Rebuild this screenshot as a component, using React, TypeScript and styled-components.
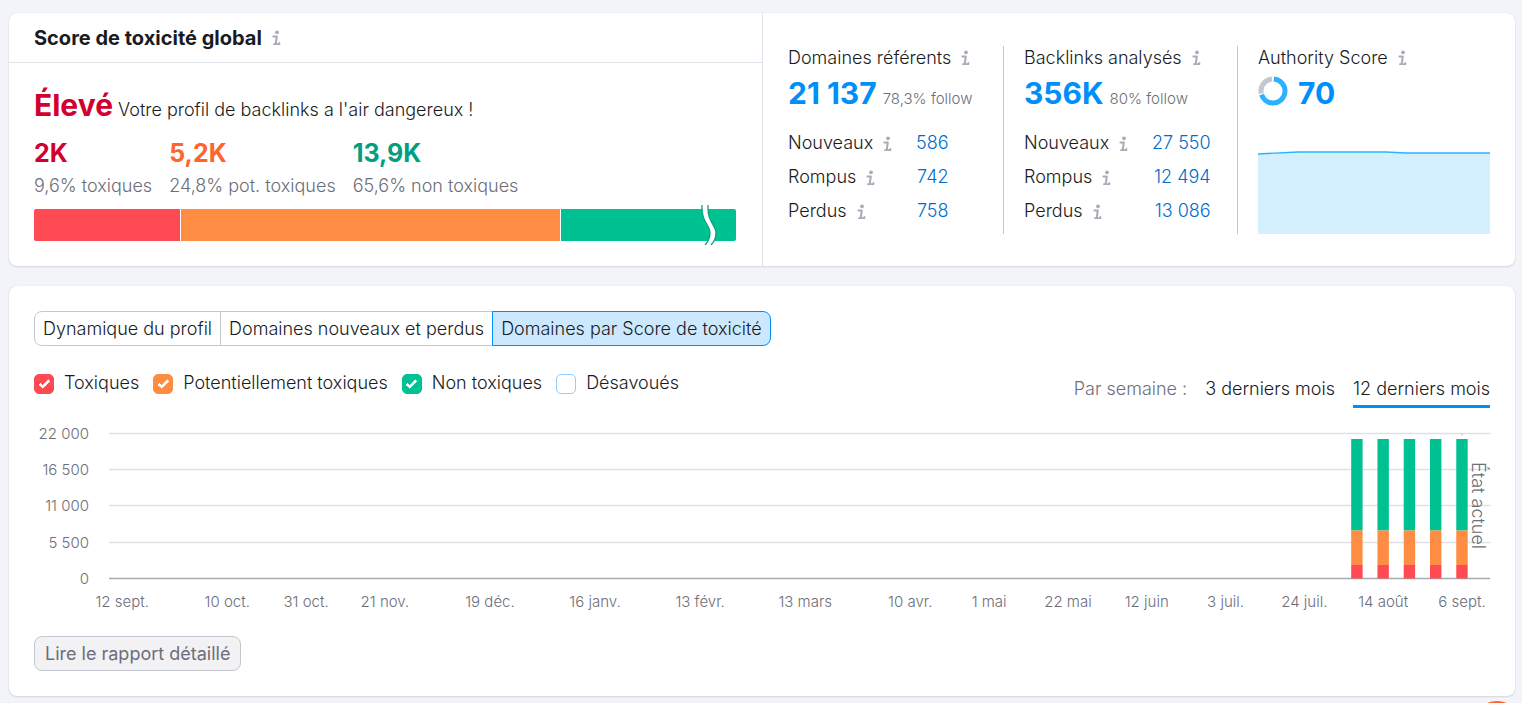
import React from "react";
import styled, { createGlobalStyle } from "styled-components";

const color = {
  page: "#f3f4f9",
  ink: "#191b23",
  muted: "#6c6e79",
  line: "#e0e1e9",
  border: "#c4c7cf",
  link: "#006dca",
  blue: "#008ff8",
  sky: "#2bb3ff",
  red: "#ff4953",
  orange: "#ff8c43",
  green: "#00c192",
};

const GlobalStyle = createGlobalStyle`
  *, *::before, *::after { box-sizing: border-box; }
  body {
    margin: 0;
    background: ${color.page};
    color: ${color.ink};
    font-family: Inter, "Liberation Sans", sans-serif;
    font-size: 18px;
    font-weight: 300;
    line-height: 24px;
    overflow-x: hidden;
  }
  button { font: inherit; color: inherit; cursor: pointer; }
  h2, h3, p { margin: 0; }
  a { color: inherit; text-decoration: none; }
`;

const Page = styled.main`
  display: flex;
  flex-direction: column;
  gap: 20px;
  padding: 13px 7px 7px 9px;
`;

const Card = styled.section`
  background: #fff;
  border-radius: 8px;
  box-shadow: 0 0 1px rgba(25, 27, 35, 0.16), 0 1px 2px rgba(25, 27, 35, 0.12);
`;

const Overview = styled(Card)`
  display: grid;
  grid-template-columns: 754fr 752fr;
`;

const ScorePane = styled.div`
  border-right: 1px solid ${color.line};
`;

const PaneHeader = styled.header`
  display: flex;
  align-items: center;
  height: 50px;
  padding: 0 25px;
  border-bottom: 1px solid ${color.line};
`;

const PaneTitle = styled.h2`
  font-size: 20px;
  font-weight: 700;
`;

const PaneBody = styled.div`
  padding: 24px 26px 25px 25px;
`;

const Verdict = styled.p`
  line-height: 36px;
  strong {
    margin-right: 5px;
    color: #d1002f;
    font-size: 30px;
    font-weight: 700;
  }
`;

const Totals = styled.div`
  display: flex;
  gap: 17px;
  margin-top: 10px;
`;

const Total = styled.div<{ $tone: string }>`
  color: ${color.muted};
  strong {
    display: block;
    margin-bottom: 6px;
    color: ${(p) => p.$tone};
    font-size: 25px;
    font-weight: 700;
    line-height: 30px;
  }
`;

const ShareBar = styled.div`
  position: relative;
  display: flex;
  gap: 1px;
  height: 32px;
  margin-top: 11px;
`;

const Share = styled.div<{ $tone: string; $grow: number }>`
  flex: ${(p) => p.$grow} 1 0;
  background: ${(p) => p.$tone};
  &:first-child { border-radius: 2px 0 0 2px; }
  &:nth-child(3) { border-radius: 0 2px 2px 0; }
`;

const BreakMark = styled.svg`
  position: absolute;
  top: -4px;
  right: 19px;
  width: 16px;
  height: 40px;
`;

const Metrics = styled.div`
  display: grid;
  grid-template-columns: 216fr 234fr 252fr;
  padding: 33px 25px 32px;
`;

const Metric = styled.article`
  display: flex;
  flex-direction: column;
  min-width: 0;
  & + & { padding-left: 20px; }
  &:not(:last-child) { border-right: 1px solid ${color.border}; }
`;

const MetricTitle = styled.h3`
  display: flex;
  align-items: center;
  font-size: 18px;
  font-weight: 300;
`;

const MetricValue = styled.p`
  display: flex;
  align-items: baseline;
  gap: 6px;
  margin-top: 5px;
  color: ${color.muted};
  font-size: 15px;
  line-height: 36px;
  white-space: nowrap;
  a {
    color: ${color.blue};
    font-size: 30px;
    font-weight: 700;
  }
`;

const AuthorityValue = styled(MetricValue)`
  align-items: center;
  gap: 10px;
  svg { overflow: visible; }
`;

const Breakdown = styled.table`
  width: max-content;
  margin-top: 14px;
  border-collapse: collapse;
  th {
    width: 128px;
    padding: 0 0 10px;
    font-weight: 300;
    text-align: left;
  }
  td {
    padding: 0 0 10px;
    color: ${color.link};
    text-align: right;
  }
  tr:last-child > * { padding-bottom: 0; }
`;

const InfoButton = styled.button`
  display: inline-flex;
  margin: 0 0 0 10px;
  padding: 0;
  border: 0;
  background: none;
  color: #a9abb6;
  vertical-align: -3px;
`;

const Trend = styled.svg`
  display: block;
  width: 100%;
  height: 84px;
  margin-top: auto;
`;

const ChartCard = styled(Card)`
  padding: 25px;
`;

const Tabs = styled.div`
  display: flex;
`;

const Tab = styled.button<{ $active?: boolean }>`
  height: 35px;
  padding: 0 8px;
  border: 1px solid ${(p) => (p.$active ? color.blue : color.border)};
  background: ${(p) => (p.$active ? "#cce8ff" : "#fff")};
  & + & { margin-left: -1px; }
  &:first-child { border-radius: 8px 0 0 8px; }
  &:last-child { border-radius: 0 8px 8px 0; }
`;

const Filters = styled.div`
  display: flex;
  justify-content: space-between;
  margin-top: 25px;
`;

const Legend = styled.div`
  display: flex;
  align-items: flex-start;
  gap: 14px;
`;

const LegendItem = styled.label`
  display: flex;
  align-items: center;
  gap: 10px;
`;

const CheckBox = styled.input<{ $tone: string }>`
  appearance: none;
  flex: none;
  display: grid;
  place-items: center;
  width: 20px;
  height: 20px;
  margin: 2px 0 0;
  border: 1px solid #8ecdff;
  border-radius: 5px;
  background: #fff;
  &:checked {
    border-color: ${(p) => p.$tone};
    background: ${(p) => p.$tone};
  }
  &:checked::before {
    content: "";
    width: 11px;
    height: 6px;
    border: solid #fff;
    border-width: 0 0 3px 3px;
    border-radius: 1px;
    transform: translateY(-1px) rotate(-45deg);
  }
`;

const Periods = styled.div`
  display: flex;
  gap: 18px;
  margin-top: 6px;
  color: ${color.muted};
`;

const Period = styled.button<{ $active?: boolean }>`
  height: 31px;
  padding: 0 0 4px;
  border: 0;
  border-bottom: 3px solid ${(p) => (p.$active ? color.blue : "transparent")};
  background: none;
  color: ${color.ink};
`;

const Chart = styled.svg`
  display: block;
  width: 100%;
  height: auto;
  margin-top: 12px;
  text { fill: ${color.muted}; }
`;

const ReportButton = styled.button`
  height: 35px;
  margin-top: 16px;
  padding: 0 10px;
  border: 1px solid ${color.border};
  border-radius: 8px;
  background: #f2f2f5;
  color: ${color.muted};
  font-weight: 400;
`;

const ChatBubble = styled.button`
  position: fixed;
  right: -1px;
  bottom: -50px;
  width: 52px;
  height: 52px;
  padding: 0;
  border: 0;
  border-radius: 50%;
  background: #ff642d;
`;

function Info({ about }: { about: string }) {
  return (
    <InfoButton type="button" aria-label={`Informations : ${about}`}>
      <svg width="9" height="16" viewBox="0 0 9 16" fill="none" stroke="currentColor" aria-hidden="true">
        <circle cx="5" cy="2.3" r="1.9" fill="currentColor" stroke="none" />
        <path d="M1.4 6.5H4.8L3.7 14" strokeWidth="2" strokeLinecap="round" strokeLinejoin="round" />
        <path d="M2 14.2H7.4V12.9" strokeWidth="1.8" strokeLinecap="round" strokeLinejoin="round" />
      </svg>
    </InfoButton>
  );
}

function Rows({ values }: { values: [string, string][] }) {
  return (
    <Breakdown>
      <tbody>
        {values.map(([label, value]) => (
          <tr key={label}>
            <th scope="row">{label}<Info about={label} /></th>
            <td><a href="#domaines">{value}</a></td>
          </tr>
        ))}
      </tbody>
    </Breakdown>
  );
}

const legend = [
  { label: "Toxiques", tone: color.red, on: true },
  { label: "Potentiellement toxiques", tone: color.orange, on: true },
  { label: "Non toxiques", tone: color.green, on: true },
  { label: "Désavoués", tone: color.blue, on: false },
];

const scale = ["22 000", "16 500", "11 000", "5 500", "0"];

const weeks: [number, string][] = [
  [0, "12 sept."], [4, "10 oct."], [7, "31 oct."], [10, "21 nov."],
  [14, "19 déc."], [18, "16 janv."], [22, "13 févr."], [26, "13 mars"],
  [30, "10 avr."], [33, "1 mai"], [36, "22 mai"], [39, "12 juin"],
  [42, "3 juil."], [45, "24 juil."], [48, "14 août"], [51, "6 sept."],
];

const weekX = (week: number) => 88.2 + week * 26.27;
const gridY = (index: number) => 13.5 + Math.round(index * 36.24);

function ToxicityChart() {
  return (
    <Chart viewBox="0 0 1456 200" role="img" aria-label="Domaines par Score de toxicité">
      {scale.map((label, i) => (
        <g key={label}>
          <text x="55" y={gridY(i) + 5.5} fontSize="15" textAnchor="end">{label}</text>
          <line x1="75" x2="1456" y1={gridY(i)} y2={gridY(i)} stroke={i === 4 ? "#a3abae" : "#e0e1e5"} strokeWidth={i === 4 ? 1.4 : 1.3} />
        </g>
      ))}
      <line x1={weekX(51)} x2={weekX(51)} y1="13" y2="16" stroke={color.border} />
      {[47, 48, 49, 50, 51].map((week) => (
        <g key={week}>
          <rect x={weekX(week) - 5.7} y="19" width="11.4" height="91.5" fill={color.green} />
          <rect x={weekX(week) - 5.7} y="110.5" width="11.4" height="34.5" fill={color.orange} />
          <rect x={weekX(week) - 5.7} y="145" width="11.4" height="13.5" fill={color.red} />
        </g>
      ))}
      <text transform="translate(1438 42) rotate(90)" fontSize="18">État actuel</text>
      {weeks.map(([week, label]) => (
        <text key={week} x={weekX(week)} y="187" fontSize="15" textAnchor="middle">{label}</text>
      ))}
    </Chart>
  );
}

export default function App() {
  return (
    <>
      <GlobalStyle />
      <Page>
        <Overview>
          <ScorePane>
            <PaneHeader>
              <PaneTitle>Score de toxicité global</PaneTitle>
              <Info about="Score de toxicité global" />
            </PaneHeader>
            <PaneBody>
              <Verdict><strong>Élevé</strong>Votre profil de backlinks a l'air dangereux !</Verdict>
              <Totals>
                <Total $tone="#d1002f"><strong>2K</strong>9,6% toxiques</Total>
                <Total $tone="#ff642d"><strong>5,2K</strong>24,8% pot. toxiques</Total>
                <Total $tone="#009f81"><strong>13,9K</strong>65,6% non toxiques</Total>
              </Totals>
              <ShareBar>
                <Share $tone={color.red} $grow={146} />
                <Share $tone={color.orange} $grow={379} />
                <Share $tone={color.green} $grow={175} />
                <BreakMark viewBox="0 0 16 40" fill="none" aria-hidden="true">
                  <path d="M4 0C3 17 12 20 12 28C12 33 11 36 7 40" stroke="#fff" strokeWidth="6" />
                  <path d="M1 0C0 17 9 20 9 28C9 33 8 36 4 40M7 0C6 17 15 20 15 28C15 33 14 36 10 40" stroke="#00a382" strokeWidth="1.3" />
                </BreakMark>
              </ShareBar>
            </PaneBody>
          </ScorePane>
          <Metrics>
            <Metric>
              <MetricTitle>Domaines référents <Info about="Domaines référents" /></MetricTitle>
              <MetricValue><a href="#domaines">21 137</a>78,3% follow</MetricValue>
              <Rows values={[["Nouveaux", "586"], ["Rompus", "742"], ["Perdus", "758"]]} />
            </Metric>
            <Metric>
              <MetricTitle>Backlinks analysés <Info about="Backlinks analysés" /></MetricTitle>
              <MetricValue><a href="#backlinks">356K</a>80% follow</MetricValue>
              <Rows values={[["Nouveaux", "27 550"], ["Rompus", "12 494"], ["Perdus", "13 086"]]} />
            </Metric>
            <Metric>
              <MetricTitle>Authority Score <Info about="Authority Score" /></MetricTitle>
              <AuthorityValue>
                <svg width="30" height="30" viewBox="0 0 30 30" fill="none" strokeWidth="5" aria-hidden="true">
                  <circle cx="15" cy="13" r="12" stroke={color.sky} pathLength="100" strokeDasharray="69 31" transform="rotate(-86 15 13)" />
                  <circle cx="15" cy="13" r="12" stroke={color.border} pathLength="100" strokeDasharray="27 73" transform="rotate(168 15 13)" />
                </svg>
                <a href="#authority">70</a>
              </AuthorityValue>
              <Trend viewBox="0 0 232 84" preserveAspectRatio="none" aria-hidden="true">
                <path d="M0 4L40 2H128L148 3H232V84H0Z" fill="#d4f0ff" />
                <path d="M0 4L40 2H128L148 3H232" fill="none" stroke={color.sky} strokeWidth="1.4" />
              </Trend>
            </Metric>
          </Metrics>
        </Overview>

        <ChartCard>
          <Tabs role="tablist">
            <Tab type="button" role="tab" aria-selected={false}>Dynamique du profil</Tab>
            <Tab type="button" role="tab" aria-selected={false}>Domaines nouveaux et perdus</Tab>
            <Tab type="button" role="tab" aria-selected $active>Domaines par Score de toxicité</Tab>
          </Tabs>
          <Filters>
            <Legend>
              {legend.map((item) => (
                <LegendItem key={item.label}>
                  <CheckBox type="checkbox" defaultChecked={item.on} $tone={item.tone} />
                  {item.label}
                </LegendItem>
              ))}
            </Legend>
            <Periods>
              <span>Par semaine :</span>
              <Period type="button">3 derniers mois</Period>
              <Period type="button" $active>12 derniers mois</Period>
            </Periods>
          </Filters>
          <ToxicityChart />
          <ReportButton type="button">Lire le rapport détaillé</ReportButton>
        </ChartCard>
      </Page>
      <ChatBubble type="button" aria-label="Ouvrir le chat" />
    </>
  );
}
